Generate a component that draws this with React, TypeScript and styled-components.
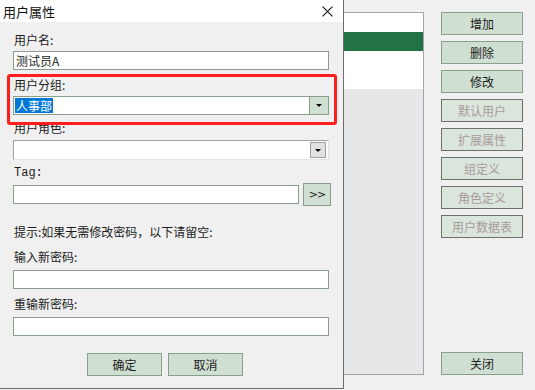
import { FC } from "react";
import styled, { createGlobalStyle } from "styled-components";

const GlobalStyle = createGlobalStyle`
  html, body {
    margin: 0;
    padding: 0;
    background: #f0f0f0;
  }
  body {
    font-family: "Noto Sans CJK SC", "DejaVu Sans", sans-serif;
    font-size: 12px;
    color: #1c1c1c;
  }
`;

const sideButtons = [
  { label: "增加", disabled: false },
  { label: "删除", disabled: false },
  { label: "修改", disabled: false },
  { label: "默认用户", disabled: true },
  { label: "扩展属性", disabled: true },
  { label: "组定义", disabled: true },
  { label: "角色定义", disabled: true },
  { label: "用户数据表", disabled: true },
];

const App: FC = () => {
  return (
    <Screen>
      <GlobalStyle />
      <MainWindow>
        <ListBox>
          <ListRow />
          <ListRow selected />
          <ListRow />
          <ListRow />
        </ListBox>
        <ButtonColumn>
          {sideButtons.map((b) => (
            <SideButton key={b.label} disabled={b.disabled}>
              {b.label}
            </SideButton>
          ))}
          <CloseButton>关闭</CloseButton>
        </ButtonColumn>
      </MainWindow>

      <Dialog>
        <TitleBar>
          <Title>用户属性</Title>
          <CloseX viewBox="0 0 10 10">
            <path d="M0.5 0.5 L9.5 9.5 M9.5 0.5 L0.5 9.5" stroke="#111" strokeWidth="1" />
          </CloseX>
        </TitleBar>
        <Body>
          <Label $top={11}>用户名:</Label>
          <TextInput $top={4}>测试员A</TextInput>

          <Label $top={8}>用户分组:</Label>
          <Combo $top={4}>
            <ComboText>
              <Selected>人事部</Selected>
            </ComboText>
            <ComboButton>
              <Arrow />
            </ComboButton>
          </Combo>

          <Label $top={6}>用户角色:</Label>
          <PlainCombo $top={5}>
            <PlainComboButton>
              <Arrow />
            </PlainComboButton>
          </PlainCombo>

          <Label $top={6} $latin>Tag:</Label>
          <TagRow>
            <TagInput />
            <MoreButton>&gt;&gt;</MoreButton>
          </TagRow>

          <Label $top={19}>提示:如果无需修改密码，以下请留空:</Label>

          <Label $top={11}>输入新密码:</Label>
          <TextInput $top={6} />

          <Label $top={8}>重输新密码:</Label>
          <TextInput $top={6} />

          <DialogButtons>
            <DialogButton>确定</DialogButton>
            <DialogButton>取消</DialogButton>
          </DialogButtons>
        </Body>
        <Highlight />
      </Dialog>
    </Screen>
  );
};

const Screen = styled.div`
  position: relative;
  width: 535px;
  height: 390px;
  overflow: hidden;
  background: #f0f0f0;
`;

const MainWindow = styled.div`
  display: flex;
  height: 390px;
  box-sizing: border-box;
  padding: 12px 12px 15px 12px;
  gap: 17px;
`;

const ListBox = styled.div`
  flex: 1;
  display: flex;
  flex-direction: column;
  background: #e6e7e8;
  border: 1px solid #a6a6a6;
`;

const ListRow = styled.div<{ selected?: boolean }>`
  height: 19px;
  flex-shrink: 0;
  background: ${(p) => (p.selected ? "#217346" : "#ffffff")};
`;

const ButtonColumn = styled.div`
  width: 82px;
  display: flex;
  flex-direction: column;
  gap: 6px;
`;

const SideButton = styled.div<{ disabled?: boolean }>`
  height: 23px;
  box-sizing: border-box;
  display: flex;
  align-items: center;
  justify-content: center;
  font-size: 12px;
  background: ${(p) => (p.disabled ? "#dae5db" : "#cfdfd1")};
  border: 1px solid ${(p) => (p.disabled ? "#6f6f6f" : "#8b9e8c")};
  color: ${(p) => (p.disabled ? "#a89b9b" : "#1c1c1c")};
`;

const CloseButton = styled(SideButton)`
  margin-top: auto;
`;

const Dialog = styled.div`
  position: absolute;
  left: 0;
  top: 0;
  width: 344px;
  height: 389px;
  box-sizing: border-box;
  background: #f0f0f0;
  border-right: 1px solid #6d6d6d;
  border-bottom: 1px solid #6d6d6d;
  display: flex;
  flex-direction: column;
`;

const TitleBar = styled.div`
  height: 22px;
  flex-shrink: 0;
  background: #ffffff;
  display: flex;
  align-items: center;
  justify-content: space-between;
  padding: 0 10px 0 3px;
`;

const Title = styled.span`
  font-size: 13px;
  color: #111;
`;

const CloseX = styled.svg`
  width: 11px;
  height: 11px;
`;

const Body = styled.div`
  display: flex;
  flex-direction: column;
  padding-left: 13px;
`;

const Label = styled.div<{ $top: number; $latin?: boolean }>`
  margin-top: ${(p) => p.$top}px;
  height: 14px;
  line-height: 14px;
  padding-left: 1px;
  font-size: 12px;
  font-family: ${(p) =>
    p.$latin ? '"Liberation Mono", "DejaVu Sans Mono", monospace' : "inherit"};
`;

const TextInput = styled.div<{ $top: number }>`
  margin-top: ${(p) => p.$top}px;
  width: 316px;
  height: 19px;
  box-sizing: border-box;
  background: #ffffff;
  border: 1px solid #8b9e8c;
  padding-left: 2px;
  line-height: 17px;
  font-size: 12px;
`;

const Combo = styled.div<{ $top: number }>`
  margin-top: ${(p) => p.$top}px;
  width: 316px;
  height: 19px;
  box-sizing: border-box;
  background: #ffffff;
  border: 1px solid #8b9e8c;
  display: flex;
`;

const ComboText = styled.div`
  flex: 1;
  display: flex;
  align-items: center;
  padding-left: 1px;
`;

const Selected = styled.span`
  background: #0078d7;
  color: #ffffff;
  line-height: 15px;
  padding: 0 1px;
`;

const ComboButton = styled.div`
  width: 18px;
  background: #cfdfd1;
  border-left: 1px solid #8b9e8c;
  display: flex;
  align-items: center;
  justify-content: center;
`;

const Arrow = styled.div`
  width: 0;
  height: 0;
  border-left: 3px solid transparent;
  border-right: 3px solid transparent;
  border-top: 3px solid #000;
`;

const PlainCombo = styled.div<{ $top: number }>`
  margin-top: ${(p) => p.$top}px;
  width: 316px;
  height: 20px;
  box-sizing: border-box;
  background: #ffffff;
  border: 1px solid #a0a0a0;
  border-bottom-color: #e3e3e3;
  border-right-color: #e3e3e3;
  display: flex;
  justify-content: flex-end;
  padding: 1px 2px 1px 0;
`;

const PlainComboButton = styled.div`
  width: 16px;
  box-sizing: border-box;
  background: #e1e1e1;
  border: 1px solid #a0a0a0;
  display: flex;
  align-items: center;
  justify-content: center;
`;

const TagRow = styled.div`
  margin-top: 3px;
  width: 318px;
  height: 23px;
  display: flex;
  align-items: center;
  gap: 4px;
`;

const TagInput = styled.div`
  width: 286px;
  height: 19px;
  box-sizing: border-box;
  background: #ffffff;
  border: 1px solid #8b9e8c;
`;

const MoreButton = styled.div`
  width: 28px;
  height: 23px;
  box-sizing: border-box;
  background: #cfdfd1;
  border: 1px solid #8b9e8c;
  display: flex;
  align-items: center;
  justify-content: center;
  font-family: "DejaVu Sans", sans-serif;
  font-size: 11px;
  letter-spacing: -1px;
  color: #222;
`;

const DialogButtons = styled.div`
  margin-top: 17px;
  padding-left: 74px;
  display: flex;
  gap: 6px;
`;

const DialogButton = styled.div`
  width: 75px;
  height: 23px;
  box-sizing: border-box;
  background: #cfdfd1;
  border: 1px solid #8b9e8c;
  display: flex;
  align-items: center;
  justify-content: center;
  font-size: 12px;
`;

const Highlight = styled.div`
  position: absolute;
  left: 7px;
  top: 74px;
  width: 330px;
  height: 51px;
  box-sizing: border-box;
  border: 3px solid #ff1e1e;
  border-radius: 3px;
  pointer-events: none;
`;

export default App;
